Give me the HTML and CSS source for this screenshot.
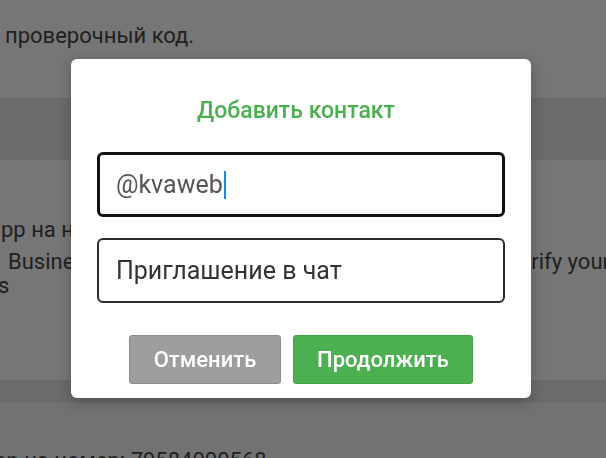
FILE: index.html
```html
<!DOCTYPE html>
<html lang="ru">
<head>
    <meta charset="UTF-8">
    <meta name="viewport" content="width=device-width, initial-scale=1.0">
    <title>Добавить контакт</title>
    <link rel="stylesheet" href="styles.css">
</head>
<body>
    <!-- Page behind the dialog -->
    <div class="page">
        <div class="band band-top">
            <p class="line code-line">проверочный код.</p>
        </div>
        <div class="band band-dark"></div>
        <div class="band band-middle">
            <p class="line app-line">pp на номер телефона</p>
            <p class="line split-line">
                <span class="split-left">Business</span>
                <span class="split-right">verify your</span>
            </p>
            <p class="line tail-line">s</p>
        </div>
        <div class="band band-thin"></div>
        <div class="band band-bottom">
            <p class="line number-line">рр на номер: 79584000568</p>
        </div>
    </div>

    <!-- Dialog -->
    <div class="modal">
        <div class="modal-title">Добавить контакт</div>
        <div class="field field-focused">
            <span class="field-value">@kvaweb</span><span class="caret"></span>
        </div>
        <div class="field">
            <span class="field-text">Приглашение в чат</span>
        </div>
        <div class="modal-buttons">
            <button class="btn btn-cancel">Отменить</button>
            <button class="btn btn-continue">Продолжить</button>
        </div>
    </div>
</body>
</html>
```

FILE: styles.css
```css
html, body {
    margin: 0;
    padding: 0;
    height: 100%;
    overflow: hidden;
    font-family: Roboto, "Liberation Sans", sans-serif;
}
body {
    background: #767676;
}
.page {
    display: flex;
    flex-direction: column;
}
.line {
    margin: 0;
    font-size: 22px;
    color: #1f1f1f;
    white-space: nowrap;
}
.band-top {
    height: 98px;
    padding: 23px 0 0 5px;
    box-sizing: border-box;
}
.band-dark {
    height: 62px;
    background: #6b6b6b;
}
.band-middle {
    height: 220px;
    padding: 57px 0 0 0;
    box-sizing: border-box;
}
.app-line {
    margin-left: 1px;
}
.split-line {
    display: flex;
    margin-top: 8px;
    line-height: 24px;
}
.split-left {
    margin-left: 8px;
}
.split-right {
    margin-left: auto;
    margin-right: -4px;
}
.tail-line {
    line-height: 24px;
    margin-left: -2px;
}
.band-thin {
    height: 23px;
    background: #6b6b6b;
}
.band-bottom {
    height: 60px;
    background: #727272;
    padding: 45px 0 0 0;
    box-sizing: border-box;
}
.number-line {
    margin-left: -6px;
}
.modal {
    position: fixed;
    top: 59px;
    left: 71px;
    width: 460px;
    height: 339px;
    box-sizing: border-box;
    padding: 38px 26px 0 26px;
    background: #fff;
    border-radius: 6px;
    box-shadow: 0 4px 14px rgba(0, 0, 0, 0.25);
}
.modal-title {
    text-align: center;
    font-size: 23px;
    font-weight: 500;
    line-height: 28px;
    color: #4caf50;
    margin-bottom: 27px;
    padding-right: 10px;
}
.field {
    height: 65px;
    border: 2px solid #2a2a2a;
    border-radius: 6px;
    box-sizing: border-box;
    display: flex;
    align-items: center;
    padding-left: 17px;
    font-size: 25px;
    color: #333;
    margin-bottom: 21px;
}
.field-focused {
    border: 3px solid #111;
    padding-left: 16px;
}
.field-value {
    color: #555;
}
.caret {
    width: 2px;
    height: 28px;
    background: #1e88e5;
    margin-left: 1px;
}
.modal-buttons {
    display: flex;
    justify-content: center;
    gap: 12px;
    margin-top: 32px;
}
.btn {
    height: 49px;
    border-radius: 3px;
    font-family: Roboto, "Liberation Sans", sans-serif;
    font-size: 22px;
    font-weight: 500;
    color: #fff;
    cursor: pointer;
}
.btn-cancel {
    width: 152px;
    background: #9e9e9e;
    border: 1px solid #8c8c8c;
}
.btn-continue {
    width: 180px;
    background: #4caf50;
    border: 1px solid #43a047;
}
```
